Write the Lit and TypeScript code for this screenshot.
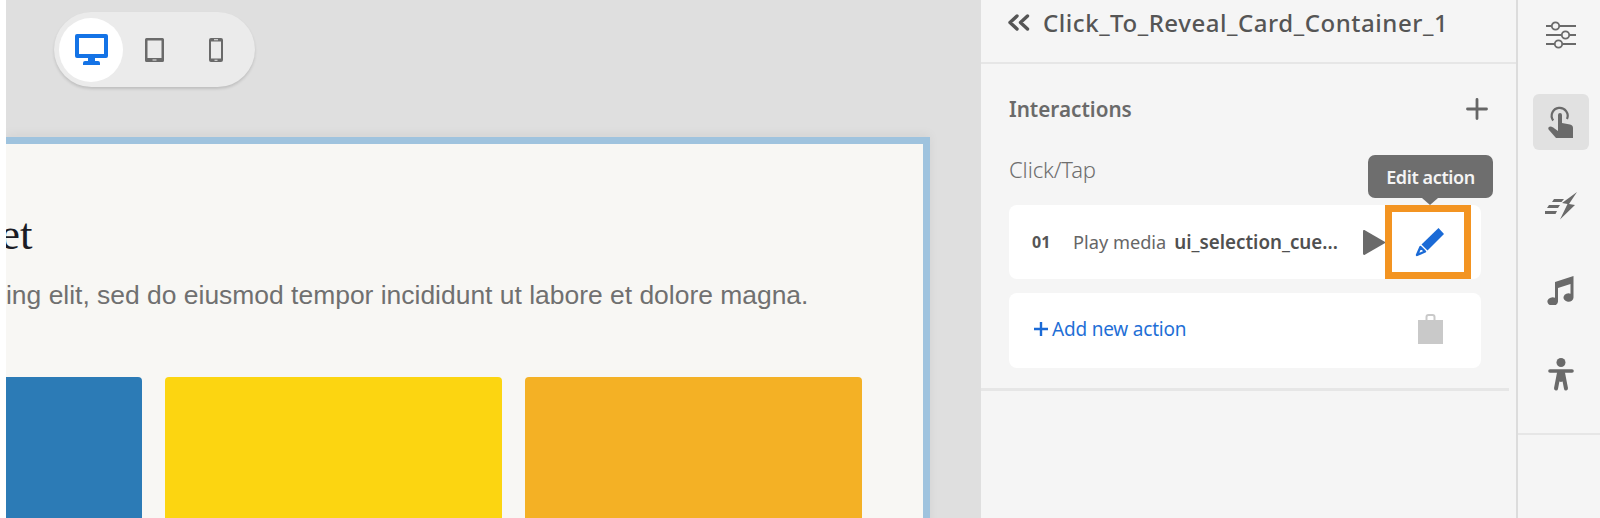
import { LitElement, html, css } from "lit";
import { customElement } from "lit/decorators.js";

@customElement("app-root")
export class AppRoot extends LitElement {
  static styles = css`
    :host { display: block; width: 1600px; height: 518px; overflow: hidden; background: #fff; font-family: "Noto Sans", sans-serif; }
    * { box-sizing: border-box; }
    .page { display: flex; height: 518px; padding-left: 6px; }
    .canvas { width: 975px; flex: none; background: #dfdfdf; padding-top: 12px; overflow: hidden; }
    .devices { display: flex; align-items: center; width: 201px; height: 75px; margin-left: 48px; padding-left: 5px; border-radius: 38px; background: #ebebeb; box-shadow: 0 2px 3px rgba(0,0,0,.14); }
    .device { display: flex; align-items: center; justify-content: center; flex: none; height: 64px; }
    .device.on { width: 64px; border-radius: 50%; background: #fff; }
    .device.tablet { width: 62px; }
    .device.phone { width: 62px; }
    .board { width: 924px; height: 400px; margin-top: 50px; background: #f8f7f4; border-top: 7px solid #9fc3de; border-right: 7px solid #9fc3de; box-shadow: 0 -3px 10px rgba(0,0,0,.05); overflow: hidden; }
    h1 { margin: 60px 0 0 -6px; font: 400 45px/60px "Liberation Serif", serif; color: #1c1c24; white-space: nowrap; }
    .lead { margin: 15px 0 0; font: 400 26.45px/32px "Liberation Sans", sans-serif; color: #707070; white-space: nowrap; }
    .tiles { display: flex; gap: 23px; margin: 66px 0 0 -201px; }
    .tile { flex: none; width: 337px; height: 160px; border-radius: 4px; }
    .tile.blue { background: #2c7bb6; }
    .tile.yellow { background: #fcd511; }
    .tile.amber { background: #f4b125; }
    .panel { width: 537px; flex: none; background: #f5f5f5; border-right: 2px solid #dcdcdc; }
    .head { display: flex; align-items: center; gap: 13px; height: 64px; padding: 0 0 18px 26px; border-bottom: 2px solid #e6e6e6; }
    .title { font-size: 24px; font-weight: 500; color: #555; letter-spacing: .55px; white-space: nowrap; }
    .section { margin-right: 7px; height: 327px; padding: 30px 28px 0 28px; border-bottom: 3px solid #e6e6e6; }
    .sec-head { display: flex; align-items: center; justify-content: space-between; height: 30px; margin-right: -7px; }
    .sec-title { font-size: 20.7px; font-weight: 600; color: #6a6a6a; }
    .trigger { margin-top: 28px; height: 34px; font-size: 22px; font-weight: 300; color: #6e6e6e; line-height: 34px; letter-spacing: -.1px; }
    .row { display: flex; align-items: stretch; height: 74px; margin-top: 19px; border-radius: 8px; background: #fff; }
    .info { flex: 1; display: flex; align-items: center; padding-left: 23px; font-size: 18.2px; color: #666; white-space: nowrap; }
    .num { width: 41px; font-size: 16px; font-weight: 700; color: #555; }
    .info b { margin-left: 8px; font-size: 18.8px; font-weight: 600; color: #505050; }
    .play { align-self: center; display: block; margin-right: -1px; }
    .focus { position: relative; display: flex; align-items: center; justify-content: center; width: 86px; margin-right: 10px; padding-left: 4px; border: 7px solid #f39421; }
    .tip { position: absolute; left: -24px; top: -57px; width: 125px; height: 43px; display: flex; align-items: center; justify-content: center; border-radius: 7px; background: #6e6e6e; color: #f4f4f4; font-size: 18px; font-weight: 600; letter-spacing: -.4px; white-space: nowrap; }
    .tip::after { content: ""; position: absolute; left: 54px; top: 43px; border: 8px solid transparent; border-top: 7px solid #6e6e6e; border-bottom: 0; }
    .add { display: flex; align-items: center; justify-content: space-between; height: 75px; margin-top: 14px; padding: 0 38px 4px 25px; border-radius: 8px; background: #fff; }
    .add-label { display: flex; align-items: center; gap: 4px; color: #1f6fd6; font-size: 19px; letter-spacing: -.2px; }
    .rail { flex: 1; background: #f5f5f5; }
    .tools { display: flex; flex-direction: column; align-items: center; height: 435px; padding-left: 3px; border-bottom: 2px solid #e6e6e6; }
    .tool { display: flex; align-items: center; justify-content: center; flex: none; width: 56px; height: 56px; margin-bottom: 28px; border-radius: 6px; }
    .tool:first-child { margin-top: 7px; margin-bottom: 31px; }
    .tool.on { background: #e1e1e1; }
    svg { display: block; }
  `;

  render() {
    const ink = "#6a6a6a";
    return html`
      <div class="page">
        <main class="canvas">
          <div class="devices">
            <div class="device on">
              <svg width="33" height="31" viewBox="0 0 33 31"><path fill="#1473e6" d="M2 0h29a2 2 0 0 1 2 2v20a2 2 0 0 1-2 2H20v3h3a2 2 0 0 1 2 2v2H8v-2a2 2 0 0 1 2-2h3v-3H2a2 2 0 0 1-2-2V2a2 2 0 0 1 2-2zm2 4v16h25V4z"/></svg>
            </div>
            <div class="device tablet">
              <svg width="19" height="24" viewBox="0 0 19 24"><path fill="${ink}" fill-rule="evenodd" d="M1.500 0h16A1.500 1.500 0 0 1 19 1.500v21a1.500 1.500 0 0 1-1.500 1.500h-16A1.500 1.500 0 0 1 0 22.500v-21A1.500 1.500 0 0 1 1.500 0zM2.500 2.500V20h14V2.500zM7.500 21.500v1h4v-1z"/></svg>
            </div>
            <div class="device phone">
              <svg width="14" height="24" viewBox="0 0 14 24"><path fill="${ink}" fill-rule="evenodd" d="M2 0h10a2 2 0 0 1 2 2v20a2 2 0 0 1-2 2H2a2 2 0 0 1-2-2V2a2 2 0 0 1 2-2zM2 3.500V20.500h10V3.500zM5 1.200v1h4v-1zM5.500 21.700v1h3v-1z"/></svg>
            </div>
          </div>
          <div class="board">
            <h1>et</h1>
            <p class="lead">ing elit, sed do eiusmod tempor incididunt ut labore et dolore magna.</p>
            <div class="tiles">
              <div class="tile blue"></div>
              <div class="tile yellow"></div>
              <div class="tile amber"></div>
            </div>
          </div>
        </main>
        <aside class="panel">
          <div class="head">
            <svg width="23" height="17" viewBox="0 0 23 17"><path fill="none" stroke="#555" stroke-width="3.400" stroke-linecap="round" stroke-linejoin="round" d="M10 2 3 8.500 10 15M20.500 2 13.500 8.500 20.500 15"/></svg>
            <span class="title">Click_To_Reveal_Card_Container_1</span>
          </div>
          <div class="section">
            <div class="sec-head">
              <span class="sec-title">Interactions</span>
              <svg width="22" height="22" viewBox="0 0 22 22"><path fill="none" stroke="#666" stroke-width="2.800" stroke-linecap="round" d="M11 1.500v19M1.500 11h19"/></svg>
            </div>
            <div class="trigger">Click/Tap</div>
            <div class="row">
              <div class="info"><span class="num">01</span>Play media <b>ui_selection_cue...</b></div>
              <svg class="play" width="23" height="25" viewBox="0 0 23 25"><path fill="${ink}" d="M0 1.500C0 .3.800-.2 1.800.3L23 12.500 1.800 24.700C.8 25.200 0 24.700 0 23.500z"/></svg>
              <div class="focus">
                <div class="tip">Edit action</div>
                <svg width="30" height="30" viewBox="0 0 30 30"><path fill="#1a6ad6" d="M23.500 1 29 7 12.500 23.500 6.500 17.500z"/><path fill="none" stroke="#1a6ad6" stroke-width="2.400" stroke-linejoin="round" d="M5.500 20 10 24.500 2 28z"/></svg>
              </div>
            </div>
            <div class="add">
              <span class="add-label">
                <svg width="14" height="14" viewBox="0 0 14 14"><path fill="none" stroke="#1a6ad6" stroke-width="2.400" d="M7 0v14M0 7h14"/></svg>
                Add new action
              </span>
              <svg width="25" height="30" viewBox="0 0 25 30"><path fill="#c9c9c9" fill-rule="evenodd" d="M0 6h7.500V3a3 3 0 0 1 3-3h4a3 3 0 0 1 3 3v3H25v24H0zM9.500 6h6V3a1 1 0 0 0-1-1h-4a1 1 0 0 0-1 1z"/></svg>
            </div>
          </div>
        </aside>
        <nav class="rail">
          <div class="tools">
            <div class="tool">
              <svg width="30" height="28" viewBox="0 0 30 28"><g fill="none" stroke="${ink}" stroke-width="1.800"><path d="M0 5h5M14 5h16M0 14h15M24 14h6M0 23h8M17 23h13"/><circle cx="9.500" cy="5" r="3.700"/><circle cx="19.500" cy="14" r="3.700"/><circle cx="12.500" cy="23" r="3.700"/></g></svg>
            </div>
            <div class="tool on">
              <svg width="25" height="32" viewBox="0 0 25 32"><path fill="none" stroke="${ink}" stroke-width="2.200" d="M5.200 14.500A8 8 0 1 1 19 13"/><path fill="${ink}" d="M10 9a2 2 0 0 1 4 0v8l8 1.500c2 .4 3 1.500 3 3.500v10H8L1 24c-1.500-1.500-.5-3.500 1.500-3.500 1.500 0 3 1 4 2L10 25z"/></svg>
            </div>
            <div class="tool">
              <svg width="32" height="28" viewBox="0 0 32 28"><path fill="${ink}" d="M32 0 17 11l5.500 1L15 27.500 30 13l-6-1zM9 7h10l-2.500 3H7zM4 13h11l-2 3H2zM0 19h12l-1.500 3H0z"/></svg>
            </div>
            <div class="tool">
              <svg width="27" height="29" viewBox="0 0 27 29"><path fill="${ink}" d="M8 6 26.500 0v21.500a5 4.200 0 1 1-3-3.800V8L11 12v13.500A5.300 4.200 0 1 1 8 21.700z"/></svg>
            </div>
            <div class="tool">
              <svg width="26" height="33" viewBox="0 0 26 33"><circle cx="13" cy="4.500" r="4.500" fill="${ink}"/><path fill="none" stroke="${ink}" stroke-width="3.600" stroke-linecap="round" d="M2 13h22"/><path fill="none" stroke="${ink}" stroke-width="4" stroke-linecap="round" stroke-linejoin="round" d="M8 30.500 11 15h4l3 15.500M13 22v-7"/></svg>
            </div>
          </div>
        </nav>
      </div>
    `;
  }
}
